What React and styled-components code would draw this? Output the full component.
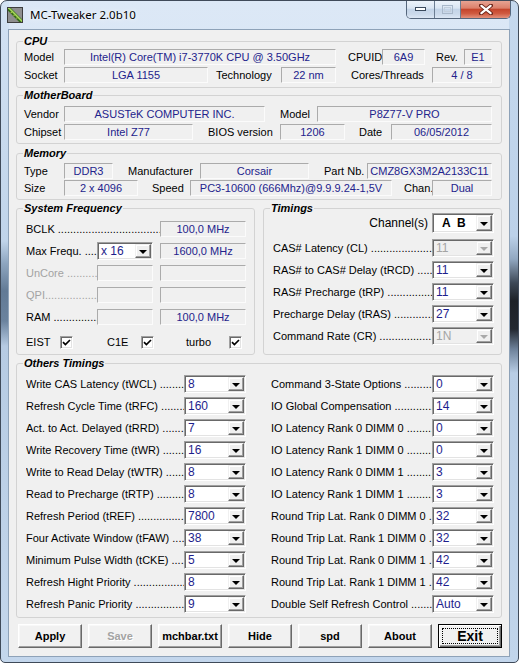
import React from "react"
import styled, { createGlobalStyle, css } from "styled-components"

const GlobalStyle = createGlobalStyle`
  html, body {
    margin: 0;
    padding: 0;
    background: #ffffff;
  }
  body {
    font-family: "Liberation Sans", Arial, sans-serif;
    font-size: 11px;
    color: #000;
  }
`

const Window = styled.div`
  width: 519px;
  height: 663px;
  box-sizing: border-box;
  border: 1px solid #3f4a59;
  border-radius: 7px 7px 5px 5px;
  padding: 0 8px 5px 7px;
  display: flex;
  flex-direction: column;
  overflow: hidden;
  background:
    linear-gradient(to bottom, #c6d9ee 0, #bcd1e9 235px, #92a8c1 258px, #3d4856 282px, #1d2127 300px, #232830 328px, #6d8199 348px, #b8cde5 372px, #c1d5eb 100%) right top / 9px 100% no-repeat,
    linear-gradient(to bottom, #d3e2f3 0, #c0d4ea 240px, #8ea6c0 262px, #627a95 290px, #6b839e 320px, #b6cbe3 345px, #c4d7ec 100%) left top / 8px 100% no-repeat,
    linear-gradient(to bottom, #dce8f6, #c3d6ec);
`

const TitleBar = styled.div`
  height: 28px;
  flex: none;
  display: flex;
  align-items: flex-start;
`

const AppIcon = styled.svg`
  flex: none;
  margin: 6px 0 0 -1px;
`

const Caption = styled.div`
  margin: 6px 0 0 7px;
  font-family: "Noto Sans", "Open Sans", sans-serif;
  font-size: 11.5px;
  line-height: 16px;
  color: #000;
  text-shadow: 0 0 6px rgba(255, 255, 255, 0.95), 0 0 2px rgba(255, 255, 255, 0.9);
`

const CaptionButtons = styled.div`
  margin: -1px -1px 0 auto;
  display: flex;
  height: 19px;
  box-sizing: border-box;
  border: 1px solid #55667c;
  border-top: none;
  border-radius: 0 0 5px 5px;
  overflow: hidden;
`

const CapBtn = styled.div`
  width: ${p => p.$w}px;
  display: flex;
  align-items: center;
  justify-content: center;
  background: ${p =>
    p.$close
      ? "linear-gradient(to bottom, #e8a898 0%, #dc806b 45%, #c5452c 52%, #cf5a40 75%, #e3917c 100%)"
      : "linear-gradient(to bottom, #eef4fb 0%, #dbe6f3 45%, #c4d4e8 52%, #ccdaeb 80%, #dce7f4 100%)"};
  & + & {
    border-left: 1px solid #6c7d92;
  }
`

const Client = styled.div`
  flex: 1;
  background: #f0f0f0;
  border: 1px solid #8ea2b8;
  padding: 5px 7px 0;
  display: flex;
  flex-direction: column;
`

const Group = styled.fieldset`
  margin: ${p => p.$mt || 0}px 0 0;
  padding: 0;
  min-width: 0;
  border: 1px solid #d3d3d3;
  border-radius: 3px;
  flex: ${p => (p.$grow ? 1 : "none")};
`

const Legend = styled.legend`
  margin-left: 6px;
  padding: 0 1px;
  font-weight: bold;
  font-style: italic;
  font-size: 11px;
  line-height: 12px;
`

const GroupBody = styled.div`
  padding: ${p => p.$pt}px 0 ${p => p.$pb}px ${p => (p.$pl === undefined ? 7 : p.$pl)}px;
  display: flex;
  flex-direction: column;
  gap: ${p => (p.$gap === undefined ? 2 : p.$gap)}px;
`

const Row = styled.div`
  display: flex;
  align-items: center;
  height: ${p => p.$h || 16}px;
  margin-top: ${p => p.$mt || 0}px;
  margin-bottom: ${p => p.$mb || 0}px;
`

const Lbl = styled.span`
  flex: none;
  width: ${p => p.$w}px;
  margin-left: ${p => p.$ml || 0}px;
  white-space: nowrap;
  color: ${p => (p.$disabled ? "#a3a3a3" : "#000")};
`

const Leader = styled.span`
  flex: none;
  width: ${p => p.$w}px;
  overflow: hidden;
  white-space: pre;
  color: ${p => (p.$disabled ? "#a3a3a3" : "#000")};
  &::after {
    content: "....................................................................................";
  }
`

const Field = styled.div`
  flex: none;
  width: ${p => p.$w}px;
  height: ${p => p.$h || 16}px;
  margin-left: ${p => p.$ml || 0}px;
  box-sizing: border-box;
  border: 1px solid;
  border-color: #ababab #fbfbfb #fbfbfb #ababab;
  background: #f0f0f0;
  text-align: center;
  line-height: ${p => (p.$h || 16) - 2}px;
  color: #23238c;
  white-space: nowrap;
  overflow: hidden;
`

const ComboFrame = styled.div`
  flex: none;
  width: ${p => p.$w}px;
  height: ${p => p.$h}px;
  box-sizing: border-box;
  border: 1px solid;
  border-color: #a0a0a0 #ffffff #ffffff #a0a0a0;
  box-shadow: inset 1px 1px #696969, inset -1px -1px #e3e3e3;
  padding: 1px;
  background: ${p => (p.$disabled ? "#f0f0f0" : "#ffffff")};
  display: flex;
  align-items: stretch;
`

const ComboText = styled.span`
  flex: 1;
  display: flex;
  align-items: center;
  padding-left: ${p => (p.$bold ? 8 : 2)}px;
  font-size: 12px;
  font-weight: ${p => (p.$bold ? "bold" : "normal")};
  white-space: pre;
  color: ${p => (p.$disabled ? "#a4a4a4" : p.$bold ? "#000" : "#1e1e8c")};
`

const ComboArrow = styled.span`
  flex: none;
  width: 16px;
  box-sizing: border-box;
  border: 1px solid;
  border-color: #f0f0f0 #696969 #696969 #f0f0f0;
  box-shadow: inset -1px -1px #a0a0a0, inset 1px 1px #ffffff;
  background: #f0f0f0;
  display: flex;
  align-items: center;
  justify-content: center;
`

const Tri = styled.span`
  width: 0;
  height: 0;
  margin-top: 1px;
  border-left: 4px solid transparent;
  border-right: 4px solid transparent;
  border-top: 4px solid ${p => (p.$disabled ? "#a9a9a9" : "#000")};
`

const CheckFrame = styled.span`
  flex: none;
  width: 13px;
  height: 13px;
  box-sizing: border-box;
  border: 1px solid;
  border-color: #a0a0a0 #ffffff #ffffff #a0a0a0;
  box-shadow: inset 1px 1px #696969, inset -1px -1px #e3e3e3;
  background: #fff;
  display: flex;
  align-items: center;
  justify-content: center;
`

const Split = styled.div`
  display: flex;
  gap: 8px;
  margin-top: 2px;
`

const ChannelLabel = styled.span`
  flex: 1;
  text-align: right;
  padding-right: 4px;
  font-size: 12px;
`

const TimingGrid = styled.div`
  padding: 6px 0 4px 9px;
  display: grid;
  grid-template-columns: 220px 223px;
  column-gap: 25px;
  row-gap: 4px;
`

const ButtonBar = styled.div`
  display: flex;
  gap: 6px;
  margin: 6px 0 0 2px;
`

const Btn = styled.button`
  position: relative;
  flex: none;
  width: 64px;
  height: 24px;
  padding: 0;
  font-family: "Liberation Sans", Arial, sans-serif;
  font-weight: bold;
  font-size: 11px;
  color: #000;
  background: #f1f1f1;
  border: 1px solid;
  border-color: #ffffff #696969 #696969 #ffffff;
  box-shadow: inset -1px -1px #a0a0a0, inset 1px 1px #f8f8f8;
  &:disabled {
    color: #a3a3a3;
    text-shadow: 1px 1px 0 #ffffff;
  }
  ${p =>
    p.$default &&
    css`
      font-size: 14px;
      border-color: #000;
      box-shadow: inset 1px 1px #ffffff, inset -1px -1px #696969, inset -2px -2px #a0a0a0;
      &::after {
        content: "";
        position: absolute;
        inset: 3px;
        border: 1px dotted #000;
      }
    `}
`

const Combo = ({ value, w = 62, h = 18, disabled, bold }) => (
  <ComboFrame $w={w} $h={h} $disabled={disabled}>
    <ComboText $disabled={disabled} $bold={bold}>{value}</ComboText>
    <ComboArrow>
      <Tri $disabled={disabled} />
    </ComboArrow>
  </ComboFrame>
)

const Check = () => (
  <CheckFrame>
    <svg width="9" height="9" viewBox="0 0 9 9">
      <path d="M1 4.2 L3.4 6.6 L8 2" fill="none" stroke="#000" strokeWidth="1.7" />
    </svg>
  </CheckFrame>
)

const timingsLeft = [
  ["Write CAS Latency (tWCL) ", "8"],
  ["Refresh Cycle Time (tRFC) ", "160"],
  ["Act. to Act. Delayed (tRRD) ", "7"],
  ["Write Recovery Time (tWR) ", "16"],
  ["Write to Read Delay (tWTR) ", "8"],
  ["Read to Precharge (tRTP) ", "8"],
  ["Refresh Period (tREF) ", "7800"],
  ["Four Activate Window (tFAW) ", "38"],
  ["Minimum Pulse Width (tCKE) ", "5"],
  ["Refresh Hight Priority ", "8"],
  ["Refresh Panic Priority ", "9"],
]

const timingsRight = [
  ["Command 3-State Options ", "0"],
  ["IO Global Compensation ", "14"],
  ["IO Latency Rank 0 DIMM 0 ", "0"],
  ["IO Latency Rank 1 DIMM 0 ", "0"],
  ["IO Latency Rank 0 DIMM 1 ", "3"],
  ["IO Latency Rank 1 DIMM 1 ", "3"],
  ["Round Trip Lat. Rank 0 DIMM 0 ", "32"],
  ["Round Trip Lat. Rank 1 DIMM 0 ", "32"],
  ["Round Trip Lat. Rank 0 DIMM 1 ", "42"],
  ["Round Trip Lat. Rank 1 DIMM 1 ", "42"],
  ["Double Self Refresh Control ", "Auto"],
]

const memTimings = [
  ["CAS# Latency (CL) ", "11", true],
  ["RAS# to CAS# Delay (tRCD) ", "11", false],
  ["RAS# Precharge (tRP) ", "11", false],
  ["Precharge Delay (tRAS) ", "27", false],
  ["Command Rate (CR) ", "1N", true],
]

const App = () => {
  return (
    <>
      <GlobalStyle />
      <Window>
        <TitleBar>
          <AppIcon width="16" height="16" viewBox="0 0 16 16">
            <defs>
              <clipPath id="ico">
                <rect x="1" y="1" width="14" height="14" />
              </clipPath>
            </defs>
            <rect x="0.5" y="0.5" width="15" height="15" fill="#8e8e8e" stroke="#3e3e3e" />
            <g clipPath="url(#ico)">
              <g transform="rotate(45 8 8)">
                <rect x="-2" y="6" width="20" height="4" fill="#356d17" />
                <rect x="-2" y="6.6" width="20" height="1.6" fill="#a6d65c" />
                <rect x="3" y="8.4" width="1" height="1" fill="#e6e35a" />
                <rect x="7" y="8.4" width="1" height="1" fill="#e6e35a" />
                <rect x="11" y="8.4" width="1" height="1" fill="#e6e35a" />
              </g>
            </g>
          </AppIcon>
          <Caption>MC-Tweaker 2.0b10</Caption>
          <CaptionButtons>
            <CapBtn $w={27}>
              <svg width="11" height="6" viewBox="0 0 11 6">
                <rect x="0.5" y="1.5" width="10" height="3" fill="#fff" stroke="#3a495c" />
              </svg>
            </CapBtn>
            <CapBtn $w={25}>
              <svg width="11" height="9" viewBox="0 0 11 9">
                <rect x="0.5" y="0.5" width="10" height="8" fill="none" stroke="#a9b8ca" />
                <rect x="2.5" y="2.5" width="6" height="4" fill="none" stroke="#c2cedc" />
              </svg>
            </CapBtn>
            <CapBtn $w={49} $close>
              <svg width="14" height="11" viewBox="0 0 14 11">
                <path d="M2 1.5 L12 9.5 M12 1.5 L2 9.5" stroke="#6b2418" strokeWidth="4" strokeLinecap="round" />
                <path d="M2.4 1.8 L11.6 9.2 M11.6 1.8 L2.4 9.2" stroke="#ffffff" strokeWidth="2.2" strokeLinecap="round" />
              </svg>
            </CapBtn>
          </CaptionButtons>
        </TitleBar>

        <Client>
          <Group>
            <Legend>CPU</Legend>
            <GroupBody $pt={2} $pb={4}>
              <Row>
                <Lbl $w={40}>Model</Lbl>
                <Field $w={272}>Intel(R) Core(TM) i7-3770K CPU @ 3.50GHz</Field>
                <Lbl $ml={12} $w={34}>CPUID</Lbl>
                <Field $w={43}>6A9</Field>
                <Lbl $ml={11} $w={28}>Rev.</Lbl>
                <Field $w={28}>E1</Field>
              </Row>
              <Row>
                <Lbl $w={40}>Socket</Lbl>
                <Field $w={144}>LGA 1155</Field>
                <Lbl $ml={8} $w={65}>Technology</Lbl>
                <Field $w={55}>22 nm</Field>
                <Lbl $ml={15} $w={81}>Cores/Threads</Lbl>
                <Field $w={60}>4 / 8</Field>
              </Row>
            </GroupBody>
          </Group>

          <Group $mt={1}>
            <Legend>MotherBoard</Legend>
            <GroupBody $pt={5} $pb={3}>
              <Row>
                <Lbl $w={40}>Vendor</Lbl>
                <Field $w={201}>ASUSTeK COMPUTER INC.</Field>
                <Lbl $ml={15} $w={37}>Model</Lbl>
                <Field $w={175}>P8Z77-V PRO</Field>
              </Row>
              <Row>
                <Lbl $w={40}>Chipset</Lbl>
                <Field $w={129}>Intel Z77</Field>
                <Lbl $ml={15} $w={72}>BIOS version</Lbl>
                <Field $w={65}>1206</Field>
                <Lbl $ml={14} $w={32}>Date</Lbl>
                <Field $w={101}>06/05/2012</Field>
              </Row>
            </GroupBody>
          </Group>

          <Group $mt={3}>
            <Legend>Memory</Legend>
            <GroupBody $pt={4} $pb={3} $gap={1}>
              <Row>
                <Lbl $w={40}>Type</Lbl>
                <Field $w={49}>DDR3</Field>
                <Lbl $ml={15} $w={72}>Manufacturer</Lbl>
                <Field $w={109}>Corsair</Field>
                <Lbl $ml={15} $w={43}>Part Nb.</Lbl>
                <Field $w={125}>CMZ8GX3M2A2133C11</Field>
              </Row>
              <Row>
                <Lbl $w={40}>Size</Lbl>
                <Field $w={74}>2 x 4096</Field>
                <Lbl $ml={14} $w={38}>Speed</Lbl>
                <Field $w={202}>PC3-10600 (666Mhz)@9.9.9.24-1,5V</Field>
                <Lbl $ml={12} $w={28}>Chan.</Lbl>
                <Field $w={60}>Dual</Field>
              </Row>
            </GroupBody>
          </Group>

          <Split>
            <Group $grow>
              <Legend>System Frequency</Legend>
              <GroupBody $pt={6} $pb={3} $pl={9} $gap={4}>
                <Row $h={18}>
                  <Leader $w={134}>{"BCLK "}</Leader>
                  <Field $w={86}>100,0 MHz</Field>
                </Row>
                <Row $h={18}>
                  <Leader $w={71}>{"Max Frequ. "}</Leader>
                  <Combo value="x 16" w={56} />
                  <Field $ml={7} $w={86}>1600,0 MHz</Field>
                </Row>
                <Row $h={18}>
                  <Leader $w={71} $disabled>{"UnCore "}</Leader>
                  <Field $w={56} />
                  <Field $ml={7} $w={86} />
                </Row>
                <Row $h={18}>
                  <Leader $w={71} $disabled>{"QPI"}</Leader>
                  <Field $w={56} />
                  <Field $ml={7} $w={86} />
                </Row>
                <Row $h={18}>
                  <Leader $w={71}>{"RAM "}</Leader>
                  <Field $w={56} />
                  <Field $ml={7} $w={86}>100,0 MHz</Field>
                </Row>
                <Row $h={18} $mt={3}>
                  <Lbl $w={34}>EIST</Lbl>
                  <Check />
                  <Lbl $ml={34} $w={34}>C1E</Lbl>
                  <Check />
                  <Lbl $ml={32} $w={43}>turbo</Lbl>
                  <Check />
                </Row>
              </GroupBody>
            </Group>

            <Group $grow>
              <Legend>Timings</Legend>
              <GroupBody $pt={0} $pb={0} $pl={9} $gap={4}>
                <Row $h={20} $mt={-1} $mb={2} style={{ paddingRight: 7 }}>
                  <ChannelLabel>Channel(s)</ChannelLabel>
                  <Combo value={"A  B"} h={20} bold />
                </Row>
                {memTimings.map(([label, value, disabled]) => (
                  <Row $h={18} key={label}>
                    <Leader $w={159}>{label}</Leader>
                    <Combo value={value} disabled={disabled} />
                  </Row>
                ))}
              </GroupBody>
            </Group>
          </Split>

          <Group $mt={2}>
            <Legend>Others Timings</Legend>
            <TimingGrid>
              {timingsLeft.map(([label, value], i) => (
                <React.Fragment key={label}>
                  <Row $h={18}>
                    <Leader $w={158}>{label}</Leader>
                    <Combo value={value} />
                  </Row>
                  <Row $h={18}>
                    <Leader $w={161}>{timingsRight[i][0]}</Leader>
                    <Combo value={timingsRight[i][1]} />
                  </Row>
                </React.Fragment>
              ))}
            </TimingGrid>
          </Group>

          <ButtonBar>
            <Btn>Apply</Btn>
            <Btn disabled>Save</Btn>
            <Btn>mchbar.txt</Btn>
            <Btn>Hide</Btn>
            <Btn>spd</Btn>
            <Btn>About</Btn>
            <Btn $default>Exit</Btn>
          </ButtonBar>
        </Client>
      </Window>
    </>
  )
}

export default App
